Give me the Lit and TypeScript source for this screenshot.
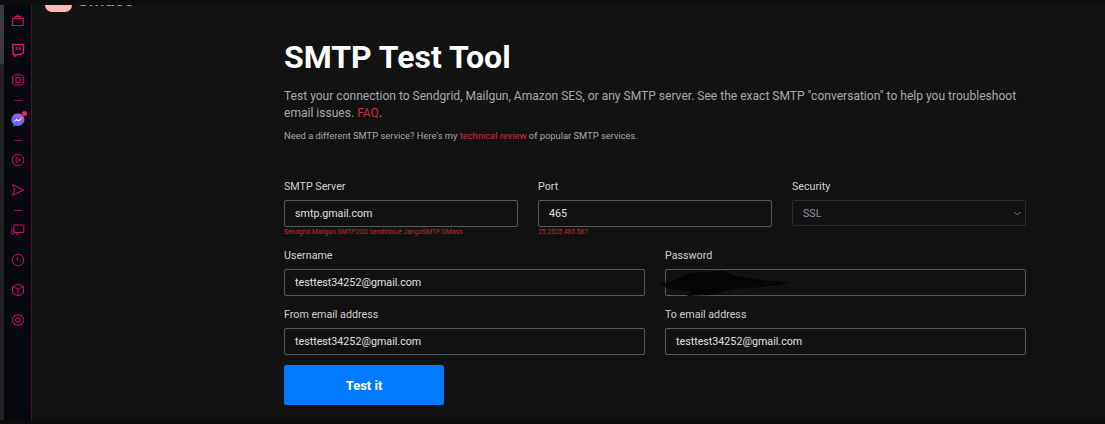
import { LitElement, html, css, svg } from "lit";
import { customElement } from "lit/decorators.js";

const icon = (content: unknown, cls = "") => html`<svg class="ic ${cls}" width="14" height="14" viewBox="0 0 14 14" fill="none">${content}</svg>`;

const bag = svg`<path d="M1.800 5.500h10.700l-.5 7H1.300z"/><path d="M1.300 8l.5-2.500"/><path d="M4 5.500V3.300h5.300v2.200"/><path d="M6.600 3.300V1.200"/>`;
const twitch = svg`<path d="M1.500 1.500h11v8l-3.200 2H6.300l-2.300 1.700v-1.700H2.300z"/><path d="M6 4v3M9 4v3"/>`;
const chip = svg`<rect x="2" y="2" width="10" height="10" rx="1.500"/><rect x="5" y="4.500" width="4" height="5"/><path d="M.5 4.500h1.500M.5 7h1.500M.5 9.500h1.500M12 4.500h1.500M12 7h1.500M12 9.500h1.500M7 .5v1.500M7 12v1.500"/>`;
const play = svg`<circle cx="7" cy="7" r="5.800"/><path d="M5.200 4.500v5l4.300-2.500z"/>`;
const send = svg`<path d="M1.500 1.500L12.500 7 1.500 12.500 3.800 7z"/>`;
const screen = svg`<rect x="2.800" y="2" width="10" height="7.500" rx=".6"/><rect x=".7" y="6" width="2.300" height="5" rx=".5"/><path d="M5 11h3"/>`;
const clock = svg`<circle cx="7" cy="7" r="5.800"/><path d="M6.600 4v3l1.500 1.600"/>`;
const box = svg`<path d="M7 1l5.500 2.500v6.500L7 13 1.500 10V3.500z"/><path d="M1.500 3.500L7 6l5.500-2.500M7 6v7"/>`;
const gear = svg`<path d="M7 1l1.300 1.400 2-.2.6 1.900 1.700 1-.7 1.900.7 1.900-1.700 1-.6 1.900-2-.2L7 13l-1.300-1.400-2 .2-.6-1.900-1.700-1 .7-1.900-.7-1.900 1.700-1 .6-1.900 2 .2z"/><circle cx="7" cy="7" r="2.400"/>`;

@customElement("app-root")
export class AppRoot extends LitElement {
  static styles = css`
    :host { display: block; width: 1105px; height: 424px; overflow: hidden; background: #121212; font-family: Roboto, "Liberation Sans", sans-serif; color: #d8d8d8; }
    * { box-sizing: border-box; }
    .page { display: flex; flex-direction: column; height: 424px; }
    .strip { height: 5px; flex: none; background: #0e0e0e; }
    .foot { height: 4px; flex: none; background: #0c0c0c; }
    .frame { display: flex; flex: 1; min-height: 0; }
    .track { width: 4px; flex: none; background: #232323; display: flex; flex-direction: column; }
    .thumb { height: 59px; background: #3b3b3b; }
    .rail { width: 28px; flex: none; background: #08080f; border-right: 1px solid #4d1232; display: flex; flex-direction: column; align-items: center; }
    .ic { display: block; stroke: #c2125f; stroke-width: 1; }
    .ic.hot { stroke: #e3146c; stroke-width: 1.400; }
    .ic.warm { stroke: #c8145f; stroke-width: 1.200; }
    .slot { height: 30px; flex: none; display: flex; align-items: center; justify-content: center; width: 100%; }
    .rule { width: 8px; height: 1px; flex: none; background: #8a1046; margin: 4.500px 0; }
    .msg { position: relative; width: 14px; height: 14px; }
    .msg .dot { position: absolute; right: -2px; top: -2px; width: 5px; height: 5px; border-radius: 50%; background: #e8206f; }
    .orb { width: 14px; height: 14px; display: block; }
    .main { flex: 1; min-width: 0; display: flex; flex-direction: column; }
    .top { height: 17px; flex: none; background: #131313; overflow: hidden; padding-left: 13px; display: flex; gap: 4px; }
    .logo { width: 27px; height: 7px; background: #fcb9b7; border-radius: 0 0 7px 7px; }
    .brand { font-size: 18.500px; line-height: 20px; margin-top: -15px; color: #a89b9b; font-weight: 500; }
    .content { flex: 1; padding: 16px 79px 0 252px; }
    h1 { margin: 0; font-size: 32px; line-height: 38px; font-weight: 700; color: #fff; }
    .lead { margin: 12px 0 0; font-size: 12.050px; line-height: 16.500px; color: #a9a9a9; max-width: 745px; }
    .note { margin: 9px 0 0; font-size: 9.350px; line-height: 12px; color: #a9a9a9; }
    a { color: #c23234; text-decoration: none; }
    .rows { margin-top: 38px; display: flex; flex-direction: column; }
    .row3 { display: grid; grid-template-columns: 234px 234px 234px; column-gap: 20px; }
    .row2 { display: grid; grid-template-columns: 361px 361px; column-gap: 20px; }
    .row2.a { margin-top: 11px; }
    .row2.b { margin-top: 12px; }
    label { display: block; font-size: 10.700px; line-height: 13px; color: #d0d0d0; margin-bottom: 7px; }
    .field { height: 27px; border: 1px solid #5a5a5a; border-radius: 2px; padding: 0 10px; font-size: 10.700px; line-height: 25px; color: #e0e0e0; }
    .field.sel { height: 26px; border-color: #2d2d2d; color: #8a93a0; display: flex; justify-content: space-between; align-items: center; padding-right: 4px; }
    .hint { font-size: 6.670px; line-height: 8px; color: #c0282a; margin-top: 1px; height: 10px; }
    .pw { position: relative; }
    .scrib { position: absolute; left: -9px; top: 0; pointer-events: none; }
    button { display: block; margin-top: 10px; width: 160px; height: 40px; border: 0; border-radius: 2px; background: #007bff; color: #fff; font: 700 13px Roboto, "Liberation Sans", sans-serif; }
  `;

  render() {
    return html`<div class="page">
      <div class="strip"></div>
      <div class="frame">
        <div class="track"><div class="thumb"></div></div>
        <nav class="rail">
          <div class="slot">${icon(bag, "warm")}</div>
          <div class="slot">${icon(twitch, "hot")}</div>
          <div class="slot">${icon(chip)}</div>
          <div class="rule"></div>
          <div class="slot"><div class="msg">
            <svg class="orb" viewBox="0 0 14 14"><defs><linearGradient id="m" x1="0" y1="1" x2="1" y2="0"><stop offset="0" stop-color="#2c8cff"/><stop offset=".5" stop-color="#7a5cf0"/><stop offset="1" stop-color="#e85fa8"/></linearGradient></defs><path d="M7 .5a6.500 6.200 0 1 1-2.300 12L2.500 13.800v-2.500A6.200 6.200 0 0 1 7 .5z" fill="url(#m)"/><path d="M3 8.500l2.800-2.500 1.800 1.400 3-2.300-2.600 3.400-1.800-1.300z" fill="#fff" stroke="#fff" stroke-width=".4"/></svg>
            <span class="dot"></span></div></div>
          <div class="rule"></div>
          <div class="slot">${icon(play)}</div>
          <div class="slot">${icon(send)}</div>
          <div class="rule"></div>
          <div class="slot">${icon(screen)}</div>
          <div class="slot">${icon(clock)}</div>
          <div class="slot">${icon(box)}</div>
          <div class="slot">${icon(gear)}</div>
        </nav>
        <div class="main">
          <div class="top"><div class="logo"></div><div class="brand">GMass</div></div>
          <div class="content">
            <h1>SMTP Test Tool</h1>
            <p class="lead">Test your connection to Sendgrid, Mailgun, Amazon SES, or any SMTP server. See the exact SMTP "conversation" to help you troubleshoot email issues. <a>FAQ</a>.</p>
            <p class="note">Need a different SMTP service? Here's my <a>technical review</a> of popular SMTP services.</p>
            <div class="rows">
              <div class="row3">
                <div><label>SMTP Server</label><div class="field">smtp.gmail.com</div><div class="hint">Sendgrid Mailgun SMTP2GO sendinblue JangoSMTP GMass</div></div>
                <div><label>Port</label><div class="field">465</div><div class="hint">25 2525 465 587</div></div>
                <div><label>Security</label><div class="field sel">SSL<svg width="7" height="5" viewBox="0 0 7 5" fill="none" stroke="#7a7a7a"><path d="M.5 1l3 3 3-3"/></svg></div></div>
              </div>
              <div class="row2 a">
                <div><label>Username</label><div class="field">testtest34252@gmail.com</div></div>
                <div><label>Password</label><div class="field pw">
                  <svg class="scrib" width="134" height="27" viewBox="0 0 134 27"><path d="M2 14l16-4 14-7 34-2 12 5 20 3 14 2 20 1-10 3-28 3-18 1-22 6-24 1 4-5-14-1-10-2z" fill="#050505"/></svg>
                </div></div>
              </div>
              <div class="row2 b">
                <div><label>From email address</label><div class="field">testtest34252@gmail.com</div></div>
                <div><label>To email address</label><div class="field">testtest34252@gmail.com</div></div>
              </div>
            </div>
            <button>Test it</button>
          </div>
        </div>
      </div>
      <div class="foot"></div>
    </div>`;
  }
}
